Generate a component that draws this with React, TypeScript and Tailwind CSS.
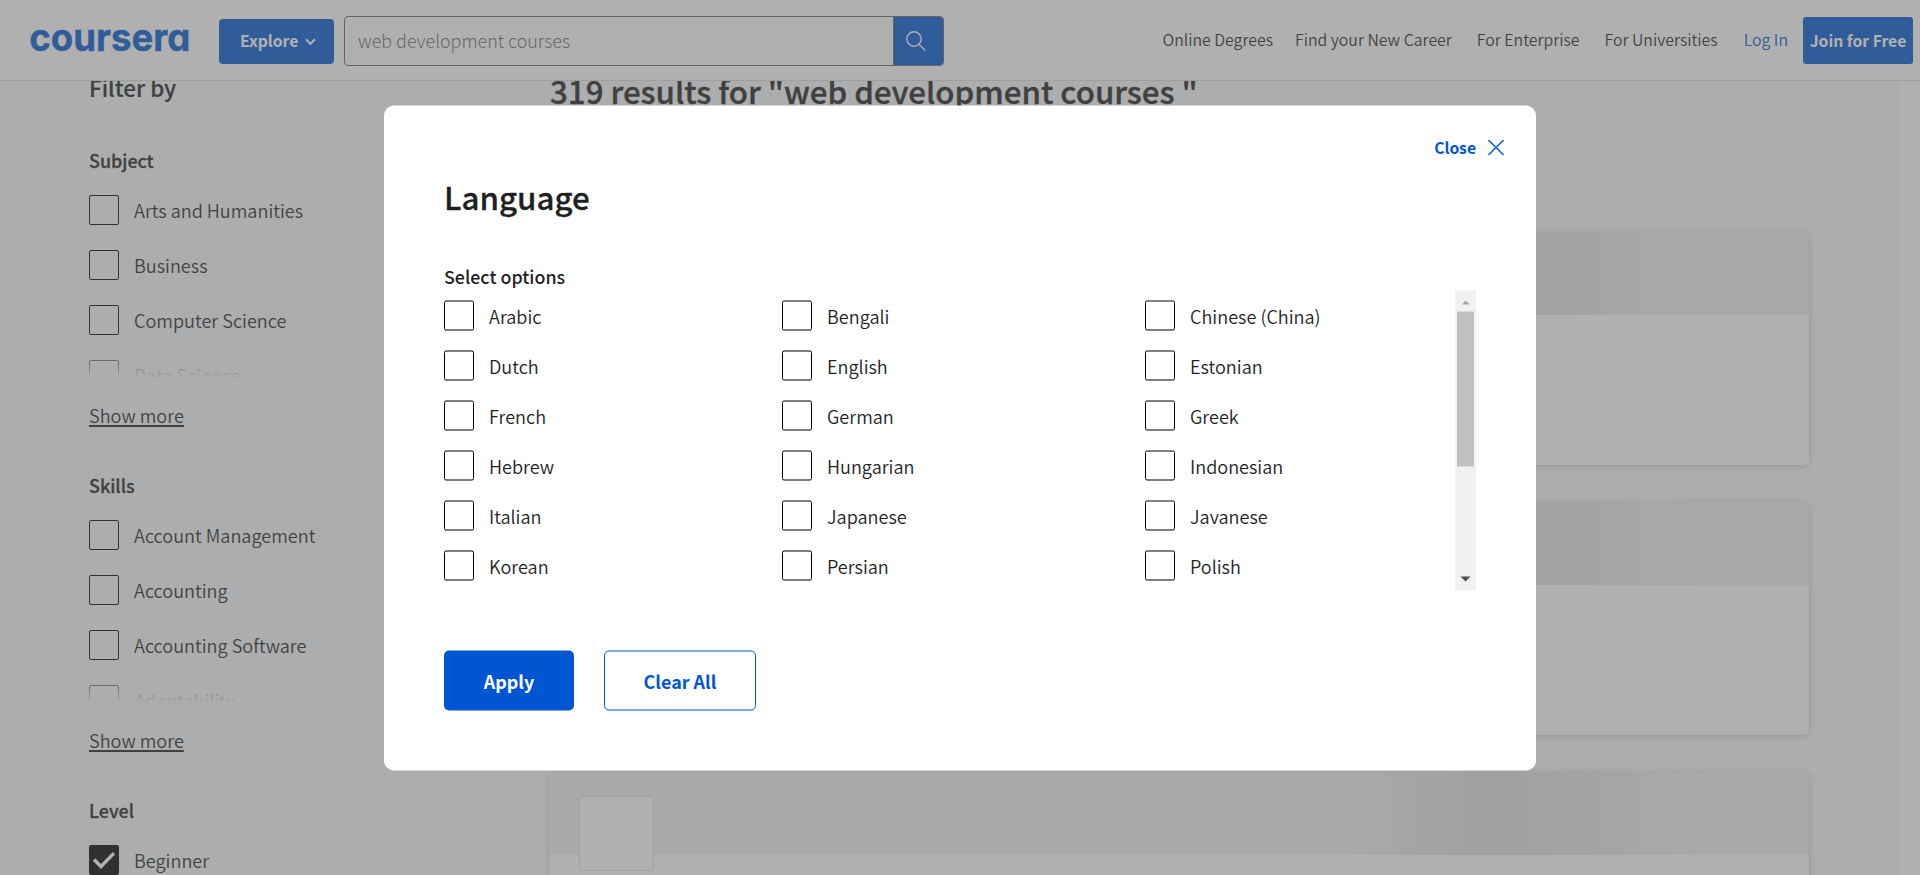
import { Fragment } from "react";

const subjects = ["Arts and Humanities", "Business", "Computer Science", "Data Science"];
const skills = ["Account Management", "Accounting", "Accounting Software", "Adaptability"];
const languages = [
  ["Arabic", "Bengali", "Chinese (China)"],
  ["Dutch", "English", "Estonian"],
  ["French", "German", "Greek"],
  ["Hebrew", "Hungarian", "Indonesian"],
  ["Italian", "Japanese", "Javanese"],
  ["Korean", "Persian", "Polish"],
];

function Box() {
  return <span className="h-[30px] w-[30px] shrink-0 rounded-[2px] border border-black" />;
}

function FilterGroup({ title, items }: { title: string; items: string[] }) {
  return (
    <section className="mb-[45px]">
      <h3 className="pt-px text-[17.92px] leading-6 font-medium [-webkit-text-stroke:0.3px]">{title}</h3>
      <div className="relative mt-[23px] h-[184px] overflow-hidden">
        <ul className="flex flex-col gap-[25px]">
          {items.map((item) => (
            <li key={item} className="flex h-[30px] items-center gap-[15px]">
              <Box />
              <span className="leading-6">{item}</span>
            </li>
          ))}
        </ul>
        <div className="absolute inset-x-0 bottom-0 h-[26px] bg-linear-to-b from-[#f7f9fb]/25 to-[#f7f9fb]" />
      </div>
      <a className="mt-6 block w-fit leading-6 underline decoration-[1.5px] underline-offset-[2px]">Show more</a>
    </section>
  );
}

function CourseCard() {
  return (
    <div className="h-[233px] shrink-0 rounded-[5px] bg-white shadow-[0_1px_7px_rgba(0,0,0,0.2)]">
      <div className="h-[83px] rounded-t-[5px] bg-[linear-gradient(to_right,#f0f0f0_800px,#dedede_940px,#f0f0f0_1150px)] pt-[24px] pl-[30px]">
        <div className="h-[75px] w-[75px] rounded-[4px] border border-[#e2e2e2] bg-white" />
      </div>
    </div>
  );
}

function Header() {
  return (
    <header className="relative z-10 flex h-[81px] shrink-0 border-b border-[#dcdcdc] bg-white text-[15.85px]">
      <svg className="ml-[28px] h-[80px] w-[164px] overflow-visible" viewBox="0 0 164 80">
        <text
          x="1.2"
          y="50.7"
          textLength="161.2"
          lengthAdjust="spacingAndGlyphs"
          className="fill-[#0056d2] stroke-[#0056d2] font-['Inter',sans-serif] text-[38.5px] font-bold [font-feature-settings:'cv11'] [stroke-width:0.4px]"
        >
          coursera
        </text>
      </svg>
      <button className="mt-[19px] ml-[27px] flex h-[45px] w-[115px] items-center rounded-[4px] bg-[#0056d2] pb-px pl-[21px] text-[15.68px] font-bold text-white">
        Explore
        <svg className="mt-px ml-[7px] h-[11px] w-[11px]" viewBox="0 0 11 11" fill="none" stroke="white" strokeWidth="2.1">
          <path d="M1 3.2 5.5 7.8 10 3.2" />
        </svg>
      </button>
      <div className="mt-4 ml-[10px] flex h-[50px] w-[600px] overflow-hidden rounded-[4px] border border-[#666]">
        <div className="flex flex-1 items-center pb-[2px] pl-[13px] text-[17.92px] font-light text-[#6a6a6a]">web development courses</div>
        <div className="flex w-[50px] items-center justify-center border-l border-[#666] bg-[#0056d2]">
          <svg className="mr-[5px] h-5 w-5" viewBox="0 0 20 20" fill="none" stroke="white" strokeWidth="1.4">
            <circle cx="8" cy="8" r="7.2" />
            <path d="m13 13.2 6.2 6.2" />
          </svg>
        </div>
      </div>
      <nav className="mt-[28px] ml-auto flex h-6 leading-6 whitespace-nowrap [font-weight:350]">
        <a className="mr-[22px]">Online Degrees</a>
        <a className="mr-[25px]">Find your New Career</a>
        <a className="mr-[25px]">For Enterprise</a>
        <a className="mr-[26px]">For Universities</a>
        <a className="mr-[15px] text-[#0056d2]">Log In</a>
      </nav>
      <button className="mt-[17px] mr-[7px] flex h-[47px] w-[110px] items-center justify-center rounded-[3px] bg-[#0056d2] text-[15.68px] font-bold whitespace-nowrap text-white">
        Join for Free
      </button>
    </header>
  );
}

function LanguageDialog() {
  return (
    <div className="h-[665px] w-[1152px] translate-y-[0.5px] rounded-[10px] bg-white px-[60px] text-[#1f1f1f]">
      <div className="-mr-[28px] flex h-[84px] items-center justify-end text-[15.68px] font-bold text-[#0056d2]">
        Close
        <svg className="ml-[12px] h-4 w-4" viewBox="0 0 16 16" fill="none" stroke="#0056d2" strokeWidth="1.4">
          <path d="M0.5 0.5 15.5 15.5M15.5 0.5 0.5 15.5" />
        </svg>
      </div>
      <h2 className="-mt-[13px] text-[31.3px] leading-10 font-medium [-webkit-text-stroke:0.3px]">Language</h2>
      <h4 className="mt-[47px] text-[17.85px] leading-6 font-medium">Select options</h4>
      <div className="mt-[3px] flex h-[300px]">
        <div className="grid flex-1 auto-rows-[50px] grid-cols-[338px_363px_1fr]">
          {languages.map((row) => (
            <Fragment key={row[0]}>
              {row.map((name) => (
                <label key={name} className="flex items-center gap-[15px]">
                  <Box />
                  <span className="leading-6">{name}</span>
                </label>
              ))}
            </Fragment>
          ))}
        </div>
        <div className="flex w-[21px] flex-col items-center bg-[#f1f1f1]">
          <svg className="h-[21px] w-[21px]" viewBox="0 0 21 21">
            <path d="M7 14h7.5l-3.75-4z" fill="#a3a3a3" />
          </svg>
          <div className="h-[155px] w-[17px] bg-[#c1c1c1]" />
          <svg className="mt-auto h-[21px] w-[21px]" viewBox="0 0 21 21">
            <path d="M5.5 7h10l-5 5z" fill="#505050" />
          </svg>
        </div>
      </div>
      <div className="mt-[60px] flex gap-[30px] text-[17.92px]">
        <button className="h-[60px] w-[130px] rounded-[5px] bg-[#0056d2] font-bold text-white">Apply</button>
        <button className="h-[60px] w-[152px] rounded-[5px] border border-[#0056d2] font-bold text-[#0056d2]">Clear All</button>
      </div>
    </div>
  );
}

export default function App() {
  return (
    <div className="relative flex h-[875px] w-[1920px] flex-col overflow-hidden bg-white font-['Noto_Sans_CJK_SC',sans-serif] text-[18.08px] text-[#1f1f1f] [font-weight:350]">
      <Header />
      <main className="mr-[21px] flex h-[794px] overflow-hidden bg-[#f7f9fb] pl-[89px]">
        <aside className="w-[460px]">
          <h2 className="-mt-[14px] mb-[40px] text-[22.4px] leading-10 font-medium [-webkit-text-stroke:0.2px]">Filter by</h2>
          <FilterGroup title="Subject" items={subjects} />
          <FilterGroup title="Skills" items={skills} />
          <h3 className="pt-px text-[17.92px] leading-6 font-medium [-webkit-text-stroke:0.3px]">Level</h3>
          <div className="mt-[23px] flex h-[30px] items-center gap-[15px]">
            <span className="flex h-[30px] w-[30px] items-center justify-center rounded-[2px] bg-black">
              <svg className="h-[22px] w-[22px]" viewBox="0 0 22 22" fill="none" stroke="white" strokeWidth="3.4">
                <path d="m1 10.5 7 7L21 4.2" />
              </svg>
            </span>
            <span className="leading-6">Beginner</span>
          </div>
        </aside>
        <section className="flex w-[1260px] flex-col">
          <h1 className="-mt-[10px] pl-px text-[31.25px] leading-10 font-medium whitespace-pre [-webkit-text-stroke:0.4px]">319 results for "web development courses "</h1>
          <div className="mt-[121px] flex flex-col gap-[37px]">
            <CourseCard />
            <CourseCard />
            <CourseCard />
          </div>
        </section>
      </main>
      <div className="absolute inset-0 z-20 flex items-center justify-center bg-[rgb(97,97,97)]/50">
        <LanguageDialog />
      </div>
    </div>
  );
}
